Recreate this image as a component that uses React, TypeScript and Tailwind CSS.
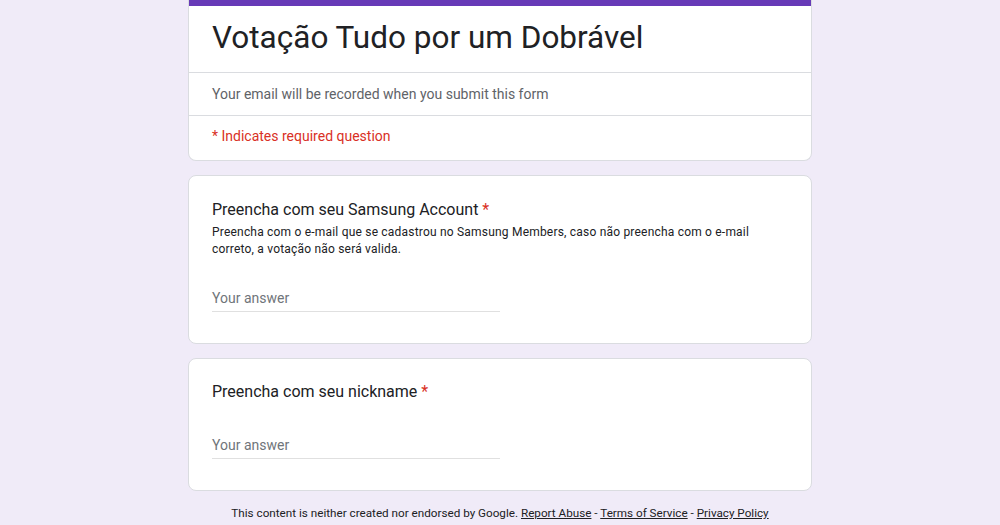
const Asterisk = () => <span className="text-[#d93025]"> *</span>;

const AnswerInput: React.FC<{ className?: string }> = ({ className }) => (
  <div
    className={`w-[288px] border-b border-[#e0e0e0] pb-[3px] text-[14px] leading-[20px] text-[#70757a] ${className ?? ""}`}
  >
    Your answer
  </div>
);

const App: React.FC = () => {
  return (
    <div className="min-h-[525px] w-full bg-[#f0ebf8] font-['Roboto',sans-serif] text-[#202124]">
      <div className="mx-auto flex w-[624px] flex-col gap-[14px]">
        <div className="overflow-hidden rounded-b-lg border border-t-0 border-[#dadce0] bg-white">
          <div className="h-[6px] bg-[#673ab7]"></div>
          <div className="px-[23px] pt-[12px] pb-[14px] text-[31.5px] leading-[40px]">
            Votação Tudo por um Dobrável
          </div>
          <div className="border-t border-[#dadce0] px-[23px] py-[11px] text-[14px] leading-[20px] text-[#5f6368]">
            Your email will be recorded when you submit this form
          </div>
          <div className="border-t border-[#dadce0] px-[23px] pt-[10px] pb-[14px] text-[14px] leading-[20px] text-[#d93025]">
            * Indicates required question
          </div>
        </div>

        <div className="rounded-lg border border-[#dadce0] bg-white px-[23px] pt-[22px] pb-[31px]">
          <div className="text-[16px] leading-[24px]">
            Preencha com seu Samsung Account
            <Asterisk />
          </div>
          <div className="mt-[2px] text-[12px] leading-[17px] tracking-[0.2px]">
            Preencha com o e-mail que se cadastrou no Samsung Members, caso não preencha com o e-mail
            <br />
            correto, a votação não será valida.
          </div>
          <AnswerInput className="mt-[30px]" />
        </div>

        <div className="rounded-lg border border-[#dadce0] bg-white px-[23px] pt-[21px] pb-[31px]">
          <div className="text-[16px] leading-[24px]">
            Preencha com seu nickname
            <Asterisk />
          </div>
          <AnswerInput className="mt-[31px]" />
        </div>

        <div className="text-center text-[11.7px] leading-[16px] text-[#202124]">
          This content is neither created nor endorsed by Google.{" "}
          <span className="underline">Report Abuse</span> -{" "}
          <span className="underline">Terms of Service</span> -{" "}
          <span className="underline">Privacy Policy</span>
        </div>
      </div>
    </div>
  );
};

export default App;
